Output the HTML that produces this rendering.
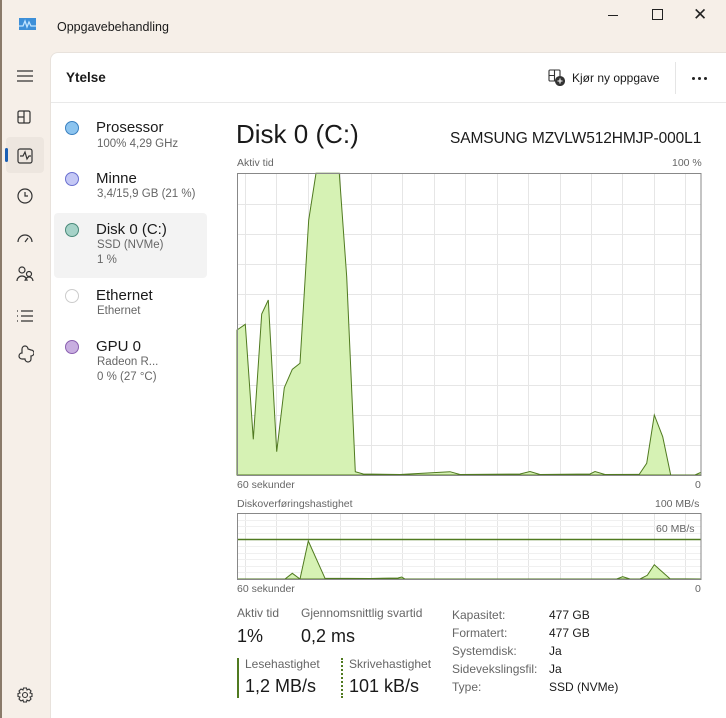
<!DOCTYPE html>
<html><head><meta charset="utf-8">
<style>
*{margin:0;padding:0;box-sizing:border-box}
body{width:726px;height:718px;overflow:hidden;background:#f6efe8;font-family:"Liberation Sans",sans-serif;color:#1a1a1a;position:relative}
.a{position:absolute;white-space:nowrap}
.panel{position:absolute;left:50px;top:52px;width:676px;height:666px;background:#fff;border-top-left-radius:8px;border-left:1px solid #e8e2dc;border-top:1px solid #e8e2dc}
.s{font-size:12px;color:#666}
.dot{position:absolute;left:65px;width:14px;height:14px;border-radius:50%}
.t{font-size:15px;color:#1a1a1a}
.sub{font-size:11.5px;color:#666}
</style></head><body>
<div class="a" style="left:0;top:0;width:2px;height:718px;background:#8a7a6a"></div>
<svg class="a" style="left:19px;top:18px" width="17" height="12"><rect width="17" height="12" fill="#3d8fd8"/><polyline points="0,8 4,8 6,3 8,9 10,4 12,8 17,8" fill="none" stroke="#bfe3ff" stroke-width="1.3"/></svg>
<div class="a" style="left:57px;top:20px;font-size:12.5px">Oppgavebehandling</div>
<div class="a" style="left:608px;top:15px;width:10px;height:1px;background:#222"></div>
<div class="a" style="left:652px;top:9px;width:11px;height:11px;border:1px solid #222"></div>
<div class="a" style="left:693px;top:5px;font-size:17px;color:#222">✕</div>

<svg class="a" style="left:16px;top:68px" width="18" height="300" fill="none" stroke="#333" stroke-width="1.2">
<path d="M1 3h16M1 8h16M1 13h16"/>
<rect x="2" y="43" width="12" height="12" rx="1.5"/><path d="M8 43v12M2 49h6"/>
<circle cx="9" cy="128" r="7"/><path d="M9 124v4h3"/>
<path d="M2 174a7 7 0 0 1 14 0M9 174l3-4"/>
<circle cx="6" cy="202" r="3"/><circle cx="13" cy="206" r="2.5"/><path d="M1 213a5 5 0 0 1 10 0M9 213a4 4 0 0 1 8 0"/>
<path d="M1 243h1M5 243h12M1 248h1M5 248h12M1 253h1M5 253h12"/>
<path d="M6 281a3 3 0 0 1 6 0l3 1a3 3 0 0 1 0 6v3a3 3 0 0 1 -6 0h-3a3 3 0 0 1 0 -6z"/>
</svg>
<div class="a" style="left:6px;top:137px;width:38px;height:36px;background:#ede6df;border-radius:4px"></div>
<svg class="a" style="left:16px;top:147px" width="18" height="18" fill="none" stroke="#333" stroke-width="1.2"><rect x="2" y="2" width="14" height="14" rx="2"/><path d="M4 9h3l2-4 2 7 2-3h2"/></svg>
<div class="a" style="left:5px;top:148px;width:3px;height:14px;background:#1a5fb4;border-radius:2px"></div>
<svg class="a" style="left:16px;top:686px" width="18" height="18" fill="none" stroke="#333" stroke-width="1.1"><circle cx="9" cy="9" r="2.5"/><path d="M7.5 2h3l.5 2 2-1 2 2-1 2 2 .5v3l-2 .5 1 2-2 2-2-1-.5 2h-3l-.5-2-2 1-2-2 1-2-2-.5v-3l2-.5-1-2 2-2 2 1z"/></svg>

<div class="panel"></div>
<div class="a" style="left:51px;top:102px;width:675px;height:1px;background:#e9e9e9"></div>
<div class="a" style="left:66px;top:70px;font-size:13.5px;font-weight:bold">Ytelse</div>
<svg class="a" style="left:548px;top:69px" width="17" height="17" fill="none" stroke="#333" stroke-width="1.1"><rect x="1" y="1" width="11" height="11" rx="1"/><path d="M6.5 1v11M1 6.5h5.5"/><circle cx="12" cy="12" r="4.5" fill="#333"/><path d="M12 9.5v5M9.5 12h5" stroke="#fff"/></svg>
<div class="a" style="left:572px;top:71px;font-size:12px">Kjør ny oppgave</div>
<div class="a" style="left:675px;top:62px;width:1px;height:32px;background:#e5e5e5"></div>
<div class="a" style="left:692px;top:77px;width:3px;height:3px;background:#222;border-radius:50%"></div>
<div class="a" style="left:698px;top:77px;width:3px;height:3px;background:#222;border-radius:50%"></div>
<div class="a" style="left:704px;top:77px;width:3px;height:3px;background:#222;border-radius:50%"></div>

<div class="a" style="left:54px;top:213px;width:153px;height:65px;background:#f3f3f3;border-radius:4px"></div>
<div class="dot" style="top:121px;background:#8cc4ef;border:1px solid #3a80c0"></div>
<div class="a t" style="left:96px;top:119px">Prosessor</div>
<div class="a sub" style="left:97px;top:138px">100% 4,29 GHz</div>
<div class="dot" style="top:172px;background:#c4c8f5;border:1px solid #6a70d0"></div>
<div class="a t" style="left:96px;top:170px">Minne</div>
<div class="a sub" style="left:97px;top:188px">3,4/15,9 GB (21 %)</div>
<div class="dot" style="top:223px;background:#a6d2c8;border:1px solid #4a8a7a"></div>
<div class="a t" style="left:96px;top:221px">Disk 0 (C:)</div>
<div class="a sub" style="left:97px;top:239px">SSD (NVMe)</div>
<div class="a sub" style="left:97px;top:254px">1 %</div>
<div class="dot" style="top:289px;background:#fff;border:1px solid #ccc"></div>
<div class="a t" style="left:96px;top:287px">Ethernet</div>
<div class="a sub" style="left:97px;top:305px">Ethernet</div>
<div class="dot" style="top:340px;background:#c8aee0;border:1px solid #8a60b0"></div>
<div class="a t" style="left:96px;top:338px">GPU 0</div>
<div class="a sub" style="left:97px;top:356px">Radeon R...</div>
<div class="a sub" style="left:97px;top:371px">0 % (27 °C)</div>

<div class="a" style="left:236px;top:119px;font-size:26px">Disk 0 (C:)</div>
<div class="a" style="left:450px;top:130px;font-size:15.5px;letter-spacing:-0.1px">SAMSUNG MZVLW512HMJP-000L1</div>
<div class="a s" style="left:237px;top:157px;font-size:10.5px">Aktiv tid</div>
<div class="a s" style="left:672px;top:157px;font-size:10.5px">100 %</div>

<svg class="a" style="left:0;top:0" width="726" height="718">
<g stroke="#e6e6e6" stroke-width="1">
<path d="M245.5 173V475M276.5 173V475M308.5 173V475M340.5 173V475M371.5 173V475M402.5 173V475M434.5 173V475M465.5 173V475M497.5 173V475M528.5 173V475M560.5 173V475M591.5 173V475M622.5 173V475M654.5 173V475M685.5 173V475"/>
<path d="M237 204.5H701M237 234.5H701M237 264.5H701M237 294.5H701M237 324.5H701M237 355.5H701M237 385.5H701M237 415.5H701M237 445.5H701"/>
<path d="M245.5 513V579M276.5 513V579M308.5 513V579M340.5 513V579M371.5 513V579M402.5 513V579M434.5 513V579M465.5 513V579M497.5 513V579M528.5 513V579M560.5 513V579M591.5 513V579M622.5 513V579M654.5 513V579M685.5 513V579"/>
</g>
<g stroke="#f0f0f0" stroke-width="1">
<path d="M237 520.5H701M237 526.5H701M237 533.5H701M237 546.5H701M237 553.5H701M237 559.5H701M237 566.5H701M237 572.5H701"/>
</g>
<path d="M237 330L245.3 324.3L253.3 439.3L261.7 314L268.3 300L276.7 451.7L284.3 387.7L292.3 369.3L300 363.3L308.7 220L316 173.3L339.3 173.3L346.7 276.7L355.3 471.7L363.3 474L400 474.5L450 471.7L460 474.5L520 474L530 471.5L540 474.5L590 474L595 471.5L605 474.5L639.3 474.3L646.7 463.3L654.3 415L662.7 436.7L670.7 475L695 475L701 472.3L701 475L237 475Z" fill="#d6f2b4" stroke="#507a20" stroke-width="1"/>
<rect x="237.5" y="173.5" width="463.5" height="302" fill="none" stroke="#888"/>
<path d="M237 579L285 579L292.3 573.3L300 579L308.3 541L325 578.3L370 578.5L398 578L401.7 577L405 579L616.7 579L622.7 576.7L630 579L640 579L647.3 575.3L654.3 564.7L670 578.7L701 579Z" fill="#d6f2b4" stroke="#507a20" stroke-width="1"/>
<path d="M237 539.5H701" stroke="#507a20" stroke-width="1.5"/>
<rect x="237.5" y="513.5" width="463.5" height="66" fill="none" stroke="#888"/>
</svg>
<div class="a s" style="left:237px;top:479px;font-size:10.5px">60 sekunder</div>
<div class="a s" style="left:695px;top:479px;font-size:10.5px">0</div>
<div class="a s" style="left:237px;top:498px;font-size:10.5px">Diskoverføringshastighet</div>
<div class="a s" style="left:655px;top:498px;font-size:10.5px">100 MB/s</div>
<div class="a s" style="left:656px;top:523px;font-size:10.5px">60 MB/s</div>
<div class="a s" style="left:237px;top:583px;font-size:10.5px">60 sekunder</div>
<div class="a s" style="left:695px;top:583px;font-size:10.5px">0</div>

<div class="a s" style="left:237px;top:606px">Aktiv tid</div>
<div class="a s" style="left:301px;top:606px">Gjennomsnittlig svartid</div>
<div class="a" style="left:237px;top:626px;font-size:18px">1%</div>
<div class="a" style="left:301px;top:626px;font-size:18px">0,2 ms</div>
<div class="a" style="left:237px;top:658px;width:2px;height:40px;background:#507a20"></div>
<div class="a" style="left:341px;top:658px;width:0;height:40px;border-left:2px dotted #507a20"></div>
<div class="a s" style="left:245px;top:657px">Lesehastighet</div>
<div class="a s" style="left:349px;top:657px">Skrivehastighet</div>
<div class="a" style="left:245px;top:676px;font-size:18px">1,2 MB/s</div>
<div class="a" style="left:349px;top:676px;font-size:18px">101 kB/s</div>
<div class="a s" style="left:452px;top:606px;line-height:18px">Kapasitet:<br>Formatert:<br>Systemdisk:<br>Sidevekslingsfil:<br>Type:</div>
<div class="a" style="left:549px;top:606px;line-height:18px;font-size:12px">477 GB<br>477 GB<br>Ja<br>Ja<br>SSD (NVMe)</div>
</body></html>
